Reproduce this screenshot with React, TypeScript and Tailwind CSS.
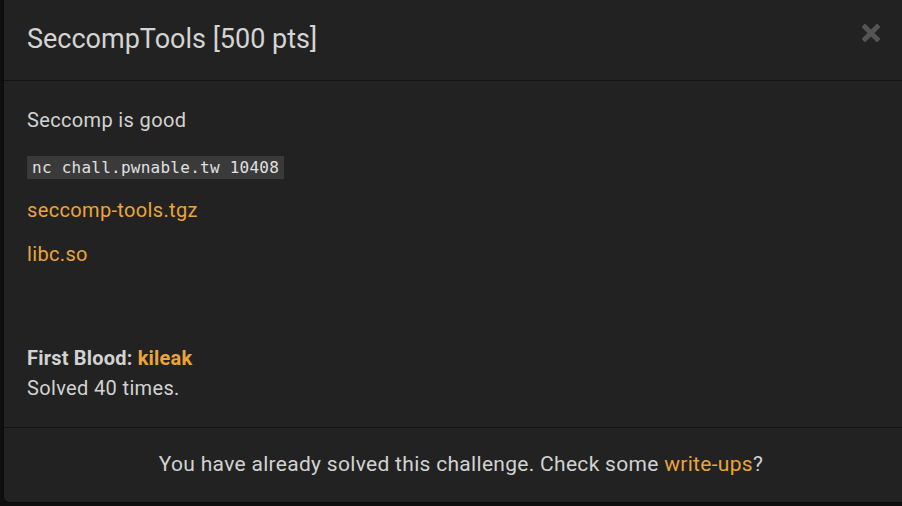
import React from 'react';

const ChallengeModal: React.FC = () => {
  return (
    <div className="ml-[3px] w-[916px] shrink-0 h-[503px] flex flex-col bg-[#222222] border border-[#0b0b0b] border-t-0 rounded-b-[6px] text-[#d2d2d2] font-['Roboto',sans-serif]">
      <div className="relative h-[81px] flex items-center px-[23px] border-b border-[#141414]">
        <h4 className="text-[27px] leading-none text-[#d4d4d4] -mt-[1px]">SeccompTools [500 pts]</h4>
        <button type="button" className="absolute right-[38px] top-[24px]">
          <svg width="18" height="18" viewBox="0 0 18 18">
            <path d="M3 3 L15 15 M15 3 L3 15" stroke="#555555" strokeWidth="5" strokeLinecap="square" />
          </svg>
        </button>
      </div>
      <div className="flex-1 px-[23px] pt-[24px] text-[20px] tracking-[0.35px] leading-[30px]">
        <p className="mb-[16px]">Seccomp is good</p>
        <p className="mb-[12px]">
          <code className="bg-[#3a3a3a] px-[5px] py-[2px] text-[16px] tracking-[0.25px] text-[#e0e0e0] font-['DejaVu_Sans_Mono',monospace]">
            nc chall.pwnable.tw 10408
          </code>
        </p>
        <p className="mb-[14px]">
          <a className="text-[#eba43c]">seccomp-tools.tgz</a>
        </p>
        <p>
          <a className="text-[#eba43c]">libc.so</a>
        </p>
        <div className="mt-[74px]">
          <p>
            <b className="font-bold tracking-[0.2px]">First Blood: </b>
            <b className="font-bold tracking-[0.2px] text-[#eba43c]">kileak</b>
          </p>
          <p>Solved 40 times.</p>
        </div>
      </div>
      <div className="h-[75px] flex items-center justify-center border-t border-[#141414] text-[21px] tracking-[0.3px]">
        <p>
          You have already solved this challenge. Check some <a className="text-[#eba43c]">write-ups</a>?
        </p>
      </div>
    </div>
  );
};

export default function App() {
  return (
    <div className="w-[902px] h-[506px] flex bg-[#0f0f0f] overflow-hidden">
      <ChallengeModal />
    </div>
  );
}
